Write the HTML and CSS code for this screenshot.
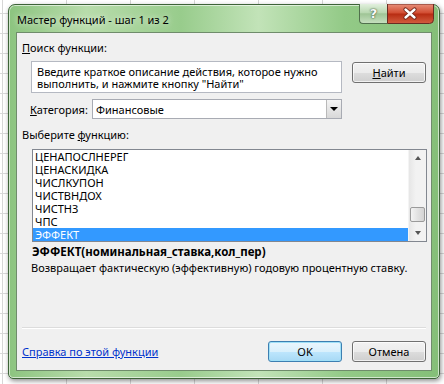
FILE: index.html
```html
<!DOCTYPE html>
<html lang="ru">
<head>
    <meta charset="UTF-8">
    <title>Мастер функций - шаг 1 из 2</title>
    <link rel="stylesheet" href="styles.css">
</head>
<body>
    <div class="window">
        <div class="titlebar">
            <span class="title">Мастер функций - шаг 1 из 2</span>
            <div class="caption-buttons">
                <span class="cap-help">?</span>
                <svg class="cap-close" width="47" height="20" viewBox="0 0 47 20">
                    <defs>
                        <linearGradient id="closeBg" x1="0" y1="0" x2="0" y2="1">
                            <stop offset="0" stop-color="#e8907b"/>
                            <stop offset="0.45" stop-color="#d24e33"/>
                            <stop offset="0.52" stop-color="#b82d13"/>
                            <stop offset="1" stop-color="#d35e40"/>
                        </linearGradient>
                    </defs>
                    <path d="M0.5 0 V19.5 H42.5 A4 4 0 0 0 46.5 15.5 V0 Z" fill="url(#closeBg)" stroke="#6b2b22"/>
                    <path d="M18.5 5.5 L27.5 13.5 M27.5 5.5 L18.5 13.5" stroke="#6e2316" stroke-width="4.2" stroke-linecap="round"/>
                    <path d="M18.5 5.5 L27.5 13.5 M27.5 5.5 L18.5 13.5" stroke="#ffffff" stroke-width="2.4" stroke-linecap="round"/>
                </svg>
            </div>
        </div>

        <div class="client">
            <div class="label"><u>П</u>оиск функции:</div>

            <div class="search-row">
                <div class="searchbox">Введите краткое описание действия, которое нужно выполнить, и нажмите кнопку "Найти"</div>
                <button class="btn"><u>Н</u>айти</button>
            </div>

            <div class="category-row">
                <span class="category-label"><u>К</u>атегория:</span>
                <div class="select">
                    <span>Финансовые</span>
                    <span class="select-arrow"></span>
                </div>
            </div>

            <div class="label">Выберите <u>ф</u>ункцию:</div>

            <div class="listbox">
                <ul class="items">
                    <li>ЦЕНАПОСЛНЕРЕГ</li>
                    <li>ЦЕНАСКИДКА</li>
                    <li>ЧИСЛКУПОН</li>
                    <li>ЧИСТВНДОХ</li>
                    <li>ЧИСТНЗ</li>
                    <li>ЧПС</li>
                    <li class="selected">ЭФФЕКТ</li>
                </ul>
                <div class="scrollbar">
                    <span class="arrow-up"></span>
                    <span class="thumb"></span>
                    <span class="arrow-down"></span>
                </div>
            </div>

            <div class="signature">ЭФФЕКТ(номинальная_ставка,кол_пер)</div>
            <div class="desc">Возвращает фактическую (эффективную) годовую процентную ставку.</div>

            <div class="separator"></div>

            <div class="footer">
                <a class="help-link" href="#">Справка по этой функции</a>
                <div class="buttons">
                    <button class="btn default">OK</button>
                    <button class="btn">Отмена</button>
                </div>
            </div>
        </div>
    </div>
</body>
</html>
```

FILE: styles.css
```css
body {
    margin: 0;
    width: 444px;
    height: 384px;
    overflow: hidden;
    font-family: 'Noto Sans', 'Open Sans', sans-serif;
    font-size: 11px;
    color: #000;
    background-color: #fff;
    background-image:
        linear-gradient(90deg, #d6d6d6 1px, transparent 1px),
        linear-gradient(#dadada 1px, transparent 1px);
    background-size: 64px 20px, 64px 20px;
    background-position: 2px 0, 0 13px;
}
.window {
    margin: 4px 0 0 8px;
    width: 432px;
    height: 375px;
    box-sizing: border-box;
    padding: 0 7px 7px 7px;
    border: 1px solid #3d6338;
    border-radius: 7px 7px 5px 5px;
    background: linear-gradient(90deg, #8cc47f 0%, #b8dcab 18%, #98cc8c 40%, #c2e3b8 58%, #93ca87 78%, #85bf78 100%);
    box-shadow: 1px 2px 5px rgba(0, 0, 0, 0.45), inset 0 0 0 1px rgba(255, 255, 255, 0.6);
    display: flex;
    flex-direction: column;
}
.titlebar {
    height: 27px;
    display: flex;
    justify-content: space-between;
    align-items: flex-start;
}
.title {
    margin: 8px 0 0 1px;
    line-height: 14px;
    color: #000;
    text-shadow: 0 0 6px rgba(255, 255, 255, 0.9);
}
.caption-buttons {
    display: flex;
    flex: none;
    margin-right: -2px;
    margin-top: -1px;
}
.cap-help {
    flex: none;
    width: 28px;
    height: 20px;
    box-sizing: border-box;
    border: 1px solid #51704d;
    border-top: none;
    border-right: none;
    border-radius: 0 0 0 4px;
    display: flex;
    align-items: center;
    justify-content: center;
    background: linear-gradient(#e2f0de, #b9d8b1 45%, #9fc596 52%, #c5dfbe);
    color: #f8f8f8;
    font-family: 'DejaVu Sans', sans-serif;
    font-weight: bold;
    font-size: 13px;
    text-shadow: 0 0 1px #3e5a3b, 0 0 2px #3e5a3b;
}
.cap-close {
    flex: none;
    display: block;
}
.client {
    flex: 1;
    background-color: #f0f0f0;
    border: 1px solid #6f8c6b;
    padding: 7px 5px 0 5px;
    display: flex;
    flex-direction: column;
}
.label {
    line-height: 16px;
}
.search-row {
    display: flex;
    align-items: flex-start;
    margin-top: 5px;
    padding-left: 9px;
}
.searchbox {
    width: 311px;
    height: 32px;
    box-sizing: border-box;
    border: 1px solid #b5b9c2;
    background-color: #fff;
    padding: 4px 0 0 5px;
    line-height: 12px;
}
.btn {
    width: 74px;
    height: 21px;
    padding: 0;
    box-sizing: border-box;
    font-family: inherit;
    font-size: 11px;
    color: #000;
    border: 1px solid #707070;
    border-radius: 3px;
    background: linear-gradient(#f2f2f2 0%, #ebebeb 50%, #dddddd 51%, #cfcfcf 100%);
    box-shadow: inset 0 0 0 1px rgba(255, 255, 255, 0.7);
}
.search-row .btn {
    margin: 1px 0 0 10px;
}
.category-row {
    display: flex;
    align-items: center;
    margin-top: 6px;
    padding-left: 8px;
}
.category-label {
    width: 62px;
}
.select {
    width: 250px;
    height: 20px;
    box-sizing: border-box;
    border: 1px solid #a8abb3;
    background-color: #fff;
    display: flex;
    align-items: center;
    justify-content: space-between;
    padding-left: 3px;
}
.select-arrow {
    width: 15px;
    height: 18px;
    box-sizing: border-box;
    border-left: 1px solid #b9b9b9;
    background: linear-gradient(#f4f4f4, #d8d8d8);
    position: relative;
}
.select-arrow::after {
    content: "";
    position: absolute;
    left: 3px;
    top: 7px;
    border-left: 4px solid transparent;
    border-right: 4px solid transparent;
    border-top: 4px solid #000;
}
.category-row + .label {
    margin-top: 8px;
}
.listbox {
    margin: 6px 0 0 10px;
    width: 395px;
    height: 93px;
    box-sizing: border-box;
    border: 1px solid #828790;
    background-color: #fff;
    display: flex;
}
.items {
    list-style: none;
    margin: 0;
    padding: 0;
    flex: 1;
    font-size: 11px;
}
.items li {
    height: 13px;
    line-height: 13px;
    padding-left: 2px;
}
.items li.selected {
    background-color: #3399ff;
    color: #fff;
}
.scrollbar {
    width: 17px;
    background: linear-gradient(90deg, #e6e6e6, #f2f2f2 40%, #f2f2f2);
    display: flex;
    flex-direction: column;
    align-items: center;
    border-left: 1px solid #f4f4f4;
}
.arrow-up,
.arrow-down {
    width: 0;
    height: 0;
    border-left: 3.5px solid transparent;
    border-right: 3.5px solid transparent;
}
.arrow-up {
    margin-top: 6px;
    border-bottom: 4px solid #555;
}
.thumb {
    margin-top: auto;
    width: 15px;
    height: 15px;
    box-sizing: border-box;
    border: 1px solid #9a9a9a;
    border-radius: 2px;
    background: linear-gradient(90deg, #f3f3f3, #e2e2e2 50%, #d3d3d3);
}
.arrow-down {
    margin: 9px 0 6px;
    border-top: 4px solid #555;
}
.signature {
    margin: 2px 0 0 10px;
    font-weight: bold;
    font-size: 11.5px;
    line-height: 16px;
}
.desc {
    margin-left: 9px;
    line-height: 16px;
}
.separator {
    margin-top: auto;
    height: 0;
    border-top: 1px solid #dcdcdc;
    border-bottom: 1px solid #fff;
}
.footer {
    display: flex;
    justify-content: space-between;
    align-items: center;
    margin-top: 12px;
    margin-bottom: 8px;
}
.help-link {
    color: #0033cc;
    text-decoration: underline;
}
.buttons {
    display: flex;
    gap: 10px;
}
.btn.default {
    border-color: #3c7fb1;
    box-shadow: inset 0 0 0 1px #9fe0f7;
    background: linear-gradient(#eaf6fd 0%, #d9f0fc 50%, #bee6fd 51%, #a7d9f5 100%);
}
```
